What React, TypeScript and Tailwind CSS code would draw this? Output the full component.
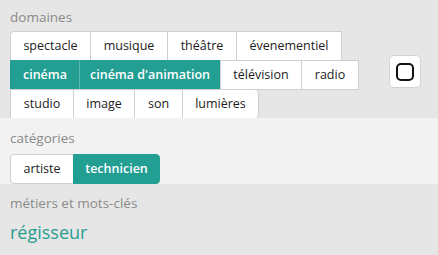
import type { ReactNode } from 'react'

type Tag = { label: string; w: string; active?: boolean; cls?: string }

const rows: Tag[][] = [
  [
    { label: 'spectacle', w: 'w-[81px]', cls: 'rounded-tl-[4px]' },
    { label: 'musique', w: 'w-[78px]' },
    { label: 'théâtre', w: 'w-[70px]' },
    { label: 'évenementiel', w: 'w-[106px]' },
  ],
  [
    { label: 'cinéma', w: 'w-[70px]', active: true },
    { label: "cinéma d'animation", w: 'w-[142px]', active: true, cls: 'border-l-[#5cb5ab]' },
    { label: 'télévision', w: 'w-[82px]' },
    { label: 'radio', w: 'w-[58px]' },
  ],
  [
    { label: 'studio', w: 'w-[64px]' },
    { label: 'image', w: 'w-[62px]' },
    { label: 'son', w: 'w-[49px]' },
    { label: 'lumières', w: 'w-[77px]', cls: 'rounded-r-[4px]' },
  ],
]

const categories: Tag[] = [
  { label: 'artiste', w: 'w-[64px]', cls: 'rounded-l-[4px]' },
  { label: 'technicien', w: 'w-[87px]', active: true, cls: 'rounded-r-[4px]' },
]

function TagButton({ tag, first }: { tag: Tag; first: boolean }) {
  return (
    <button
      className={[
        'flex h-[30px] shrink-0 items-center justify-center border text-[12.5px]',
        tag.w,
        first ? '' : '-ml-px',
        tag.active
          ? 'border-[#229e92] bg-[#229e92] font-semibold text-white'
          : 'border-[#cfcfcf] bg-white text-[#1c1c1c]',
        tag.cls ?? '',
      ].join(' ')}
    >
      {tag.label}
    </button>
  )
}

function Label({ children }: { children: ReactNode }) {
  return <div className="h-[18px] text-[13.5px] leading-[18px] text-[#8a8a8a]">{children}</div>
}

export default function App() {
  return (
    <div className="h-[255px] w-[438px] overflow-hidden font-['Open_Sans',sans-serif]">
      <section className="h-[118px] overflow-hidden bg-[#e6e6e6] pl-[10px] pt-[8px]">
        <Label>domaines</Label>
        <div className="mt-[5px] flex items-start">
          <div className="flex flex-col">
            {rows.map((row, i) => (
              <div key={i} className={i === 0 ? 'flex' : '-mt-px flex'}>
                {row.map((tag, j) => (
                  <TagButton key={tag.label} tag={tag} first={j === 0} />
                ))}
              </div>
            ))}
          </div>
          <button className="ml-[30px] mt-[24px] flex h-[33px] w-[32px] items-center justify-center rounded-[5px] border border-[#d4d4d4] bg-white">
            <svg width="18" height="18" viewBox="0 0 18 18" fill="none">
              <rect x="1" y="1" width="16" height="16" rx="4" stroke="#111" strokeWidth="2" />
            </svg>
          </button>
        </div>
      </section>

      <section className="h-[66px] bg-[#f2f2f2] pl-[10px] pt-[11px]">
        <Label>catégories</Label>
        <div className="mt-[7px] flex">
          {categories.map((tag, j) => (
            <TagButton key={tag.label} tag={tag} first={j === 0} />
          ))}
        </div>
      </section>

      <section className="h-[71px] bg-[#e6e6e6] pl-[10px] pt-[10px]">
        <Label>métiers et mots-clés</Label>
        <div className="mt-[8px] text-[18px] leading-[24px] text-[#2a9d90]">régisseur</div>
      </section>
    </div>
  )
}
